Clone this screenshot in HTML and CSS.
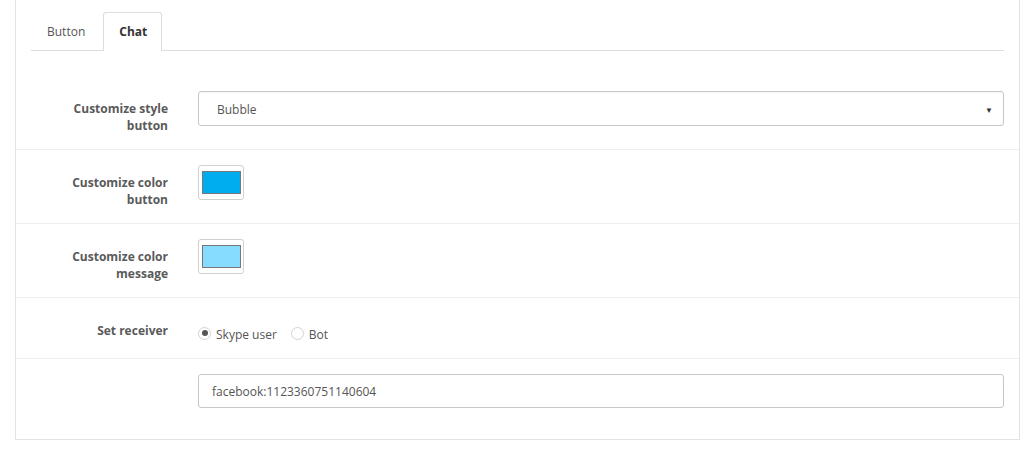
FILE: index.html
```html
<!DOCTYPE html>
<html>
<head>
<meta charset="utf-8">
<link rel="stylesheet" href="styles.css">
</head>
<body>
<div class="panel">
  <div class="tabs-wrap">
    <ul class="tabs">
      <li class="tab">Button</li>
      <li class="tab active">Chat</li>
    </ul>
  </div>
  <div class="form">
    <div class="row first">
      <div class="label">Customize style button</div>
      <div class="control">
        <div class="select"><span>Bubble</span><span class="caret">▼</span></div>
      </div>
    </div>
    <div class="row">
      <div class="label">Customize color button</div>
      <div class="control">
        <div class="swatch"><div class="swatch-fill blue"></div></div>
      </div>
    </div>
    <div class="row">
      <div class="label">Customize color message</div>
      <div class="control">
        <div class="swatch"><div class="swatch-fill light"></div></div>
      </div>
    </div>
    <div class="row">
      <div class="label">Set receiver</div>
      <div class="control radios">
        <span class="radio checked"></span><span class="radio-text">Skype user</span>
        <span class="radio"></span><span class="radio-text">Bot</span>
      </div>
    </div>
    <div class="row last">
      <div class="label"></div>
      <div class="control">
        <div class="input">facebook:1123360751140604</div>
      </div>
    </div>
  </div>
</div>
</body>
</html>
```
FILE: styles.css
```css
html, body {
  margin: 0;
  padding: 0;
  background: #fff;
  font-family: "Open Sans", "Liberation Sans", sans-serif;
  font-size: 12px;
  color: #555;
}
.panel {
  margin-left: 15px;
  width: 1003px;
  border: 1px solid #e3e3e3;
  border-top: 0;
  padding-top: 12px;
  padding-bottom: 16px;
  box-shadow: 0 1px 1px rgba(0,0,0,0.03);
}
.tabs-wrap {
  padding: 0 15px;
}
.tabs {
  list-style: none;
  margin: 0;
  padding: 0;
  display: flex;
  border-bottom: 1px solid #ddd;
}
.tab {
  padding: 10px 15px;
  line-height: 17px;
  border: 1px solid transparent;
  border-bottom: 0;
  margin-right: 2px;
  margin-bottom: -1px;
  color: #555;
  border-radius: 3px 3px 0 0;
}
.tab.active {
  border-color: #ddd;
  background: #fff;
  font-weight: bold;
  color: #333;
  padding-bottom: 11px;
  padding-left: 15px;
  padding-right: 14px;
}
.form {
  margin-top: 25px;
}
.row {
  display: flex;
  padding: 15px 0 14px;
  border-top: 1px solid #eee;
}
.row.first {
  border-top: 0;
  padding-bottom: 15px;
}
.row.last {
  padding-bottom: 15px;
}
.label {
  width: 128px;
  padding: 9px 15px 0 24px;
  text-align: right;
  font-weight: bold;
  line-height: 17px;
  color: #5a5a5a;
  flex-shrink: 0;
}
.control {
  flex: 1;
  padding: 0 15px;
}
.select, .input {
  height: 32px;
  border: 1px solid #c7c7c7;
  border-radius: 3px;
  display: flex;
  align-items: center;
  color: #555;
}
.select {
  padding: 1px 10px 0 18px;
  justify-content: space-between;
  box-shadow: inset 0 1px 1px rgba(0,0,0,0.04);
}
.caret {
  font-size: 8px;
  color: #333;
}
.input {
  padding: 0 13px;
}
.swatch {
  width: 44px;
  height: 33px;
  border: 1px solid #d0d0d0;
  border-radius: 3px;
  box-sizing: content-box;
  display: flex;
  align-items: center;
  justify-content: center;
  margin-bottom: 9px;
}
.swatch-fill {
  width: 39px;
  height: 23px;
  border: 1px solid #777;
  box-sizing: border-box;
}
.swatch-fill.blue { background: #00aeef; }
.swatch-fill.light { background: #86dcfe; }
.radios {
  display: flex;
  align-items: center;
  padding-top: 12px;
  height: 19px;
  line-height: 19px;
}
.radio {
  width: 13px;
  height: 13px;
  border: 1px solid #d3d3d3;
  border-radius: 50%;
  box-sizing: border-box;
  position: relative;
  margin-top: -3px;
  margin-right: 5px;
  background: #fff;
}
.radio.checked::after {
  content: "";
  position: absolute;
  left: 2.5px;
  top: 2.5px;
  width: 6px;
  height: 6px;
  border-radius: 50%;
  background: #555;
}
.radio-text {
  margin-right: 14px;
  color: #555;
}
```
